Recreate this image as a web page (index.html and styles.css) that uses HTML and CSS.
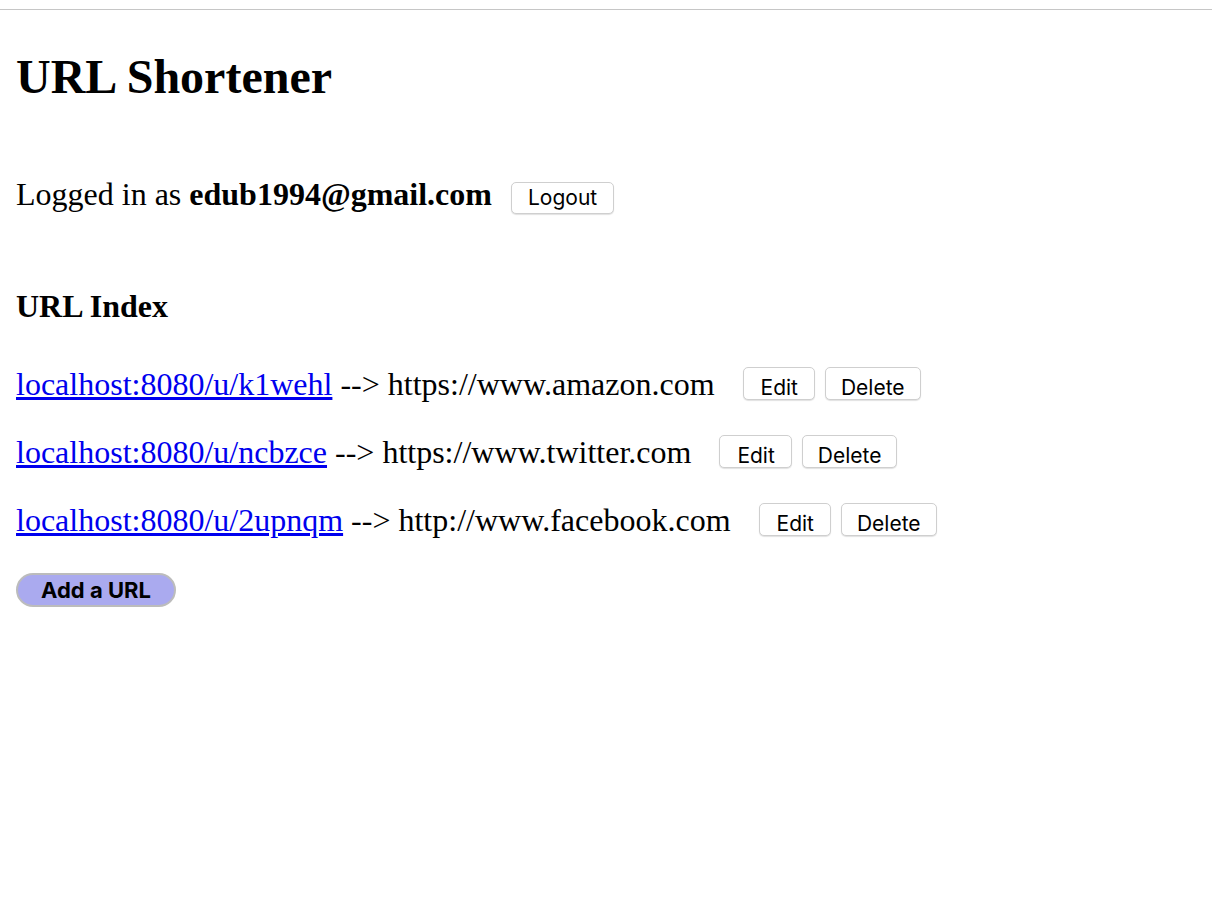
FILE: index.html
```html
<!DOCTYPE html>
<html>
<head>
<meta charset="utf-8">
<title>URL Shortener</title>
<link rel="stylesheet" href="styles.css">
</head>
<body>
<div class="topbar"></div>
<main class="page">
  <h1 class="title">URL Shortener</h1>
  <div class="login-row">
    <span class="login-text">Logged in as <b>edub1994@gmail.com</b></span>
    <button class="btn btn-logout">Logout</button>
  </div>
  <h3 class="section-title">URL Index</h3>
  <div class="url-list">
    <div class="url-row">
      <span class="url-text"><a href="#" class="short-link">localhost:8080/u/k1wehl</a> --&gt; https://www.amazon.com</span>
      <button class="btn btn-row btn-edit">Edit</button>
      <button class="btn btn-row btn-delete">Delete</button>
    </div>
    <div class="url-row">
      <span class="url-text"><a href="#" class="short-link">localhost:8080/u/ncbzce</a> --&gt; https://www.twitter.com</span>
      <button class="btn btn-row btn-edit">Edit</button>
      <button class="btn btn-row btn-delete">Delete</button>
    </div>
    <div class="url-row">
      <span class="url-text"><a href="#" class="short-link">localhost:8080/u/2upnqm</a> --&gt; http://www.facebook.com</span>
      <button class="btn btn-row btn-edit">Edit</button>
      <button class="btn btn-row btn-delete">Delete</button>
    </div>
  </div>
  <button class="btn-add">Add a URL</button>
</main>
</body>
</html>
```

FILE: styles.css
```css
html, body {
  margin: 0;
  padding: 0;
  background: #ffffff;
}

body {
  font-family: "Liberation Serif", "Times New Roman", serif;
  font-size: 32px;
  color: #000000;
}

.topbar {
  height: 9px;
  border-bottom: 1px solid #c6c6c6;
}

.page {
  padding: 0 16px;
}

.title {
  margin: 40px 0 0 0;
  font-size: 48px;
  line-height: 54px;
  font-weight: bold;
}

.login-row {
  display: flex;
  align-items: baseline;
  margin-top: 72px;
  line-height: 36px;
}

.login-text b {
  font-weight: bold;
}

.btn {
  font-family: Inter, "Liberation Sans", sans-serif;
  font-size: 21px;
  line-height: 26px;
  height: 32px;
  padding: 2px 16px;
  background: #ffffff;
  color: #000000;
  border: 1px solid #cfcfcf;
  border-radius: 5px;
  box-shadow: 0 1px 1px rgba(0, 0, 0, 0.12);
  box-sizing: border-box;
}

.btn-row {
  height: 33px;
  line-height: 25px;
  padding-top: 7px;
  padding-bottom: 0;
}

.btn-logout {
  margin-left: 19px;
}

.section-title {
  margin: 74px 0 0 0;
  font-size: 32px;
  line-height: 36px;
  font-weight: bold;
}

.url-list {
  display: flex;
  flex-direction: column;
  gap: 32px;
  margin-top: 42px;
}

.url-row {
  display: flex;
  align-items: baseline;
  line-height: 36px;
}

.short-link {
  color: #0000ee;
  text-decoration: underline;
}

.btn-edit {
  margin-left: 28px;
  padding-left: 17px;
  padding-right: 16px;
}

.btn-delete {
  margin-left: 10px;
  padding-left: 15px;
  padding-right: 15px;
}

.btn-add {
  display: block;
  margin-top: 35px;
  width: 160px;
  height: 34px;
  padding: 0;
  font-family: Inter, "Liberation Sans", sans-serif;
  font-size: 22px;
  font-weight: bold;
  color: #000000;
  background: #aaaaef;
  border: 2px solid #bcbcbc;
  border-radius: 17px;
  box-sizing: border-box;
}
```
